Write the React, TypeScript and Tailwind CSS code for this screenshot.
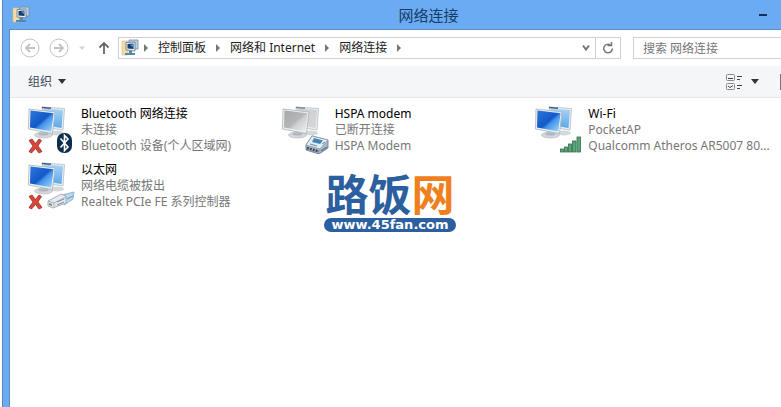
import type { ReactNode } from "react";

type Badge = "bluetooth" | "ethernet" | "modem" | "wifi";

type Connection = {
  name: string;
  status: string;
  device: string;
  badge: Badge;
  failed?: boolean;
  disabled?: boolean;
};

const connections: Connection[] = [
  { name: "Bluetooth 网络连接", status: "未连接", device: "Bluetooth 设备(个人区域网)", badge: "bluetooth", failed: true },
  { name: "HSPA modem", status: "已断开连接", device: "HSPA Modem", badge: "modem", disabled: true },
  { name: "Wi-Fi", status: "PocketAP", device: "Qualcomm Atheros AR5007 80...", badge: "wifi" },
  { name: "以太网", status: "网络电缆被拔出", device: "Realtek PCIe FE 系列控制器", badge: "ethernet", failed: true },
];

const badges: Record<Badge, ReactNode> = {
  bluetooth: (
    <g>
      <rect x="29" y="27" width="15" height="20" rx="7" fill="#0d2f4f" />
      <path d="M32.5 32.5 40 41 36.5 44.5V29.5L40 33 32.5 41.5" fill="none" stroke="#fff" strokeWidth="1.6" />
    </g>
  ),
  modem: (
    <g strokeLinejoin="round">
      <path d="M24 39 30 30 46 34 46 42 37 48 24 44Z" fill="#a9b8c4" stroke="#66747f" strokeWidth=".8" />
      <path d="M24 39 30 30 46 34 38 43Z" fill="#e3edf4" stroke="#7f919e" strokeWidth=".7" />
      <path d="M32 32 41 34.5 38 38 30 36Z" fill="#3f86b8" />
      <path d="m28 38 7 2M40 38l3-2" stroke="#6f8796" />
      <path d="m25 42 12 3.500" stroke="#3b4b57" strokeWidth="2.500" strokeDasharray="2 1" />
      <path d="m39 45 6-4" stroke="#4684a8" strokeWidth="1.5" />
    </g>
  ),
  wifi: (
    <g fill="#55a878" stroke="#37684c" strokeWidth=".8">
      <rect x="25.5" y="43" width="3" height="3" />
      <rect x="29.5" y="41" width="3" height="5" />
      <rect x="33.5" y="38" width="3" height="8" />
      <rect x="37.5" y="35" width="3.5" height="11" />
      <rect x="42" y="31" width="3.5" height="15" />
    </g>
  ),
  ethernet: (
    <g strokeLinejoin="round">
      <path d="m34 33 12-3-1 7-9 6Z" fill="#b9d9ee" stroke="#7ea9c7" strokeWidth=".8" />
      <path d="M20 39 33 32l5 2v7l-13 5-5-2Z" fill="#e4e9ed" stroke="#98a2aa" strokeWidth=".8" />
      <path d="m20 39 6 2 12-6M26 41v4" fill="none" stroke="#98a2aa" strokeWidth=".8" />
      <path d="m29 40 7-3M29 43l7-3M39 37l6-3" stroke="#7d909d" />
      <path d="m21 41 3 1v2l-3-1Z" fill="#7b858d" />
    </g>
  ),
};

const ConnectionIcon = ({ badge, failed, disabled }: Pick<Connection, "badge" | "failed" | "disabled">) => {
  const id = `screen-${badge}`;
  return (
    <svg viewBox="0 0 48 48" className="size-12 shrink-0" aria-hidden="true">
      <defs>
        <linearGradient id={id} x1="0" y1="0" x2="1" y2="1">
          <stop offset="0" stopColor={disabled ? "#a4a6a7" : "#2a78dc"} />
          <stop offset=".5" stopColor={disabled ? "#b5b6b7" : "#1558c8"} />
          <stop offset=".6" stopColor={disabled ? "#cecfd0" : "#4595ea"} />
          <stop offset="1" stopColor={disabled ? "#efefef" : "#a5dcfb"} />
        </linearGradient>
        <linearGradient id={`${id}-back`} x1="0" y1="0" x2="0" y2="1">
          <stop offset="0" stopColor={disabled ? "#cfd0d1" : "#a9d3f7"} />
          <stop offset="1" stopColor={disabled ? "#d5d6d7" : "#5ba9ea"} />
        </linearGradient>
      </defs>
      {/* Back monitor */}
      <ellipse cx="29" cy="27" rx="7" ry="2.5" fill="#d5d8da" />
      <path d="M14 1 36.5 2.5 35 24 15 21Z" fill="#e8edf0" stroke="#b5bec5" strokeWidth=".8" />
      <path d="M15.5 2.5 35 4 33.5 22 16 19Z" fill={`url(#${id}-back)`} />
      <path d="m14 1.5 9 .8" stroke={disabled ? "#85898c" : "#42627f"} strokeWidth="1.5" />
      {/* Front monitor */}
      <path d="m12 23 6 1v4h-6Z" fill="#c3c8cc" />
      <ellipse cx="15.5" cy="29" rx="9" ry="3" fill="#d3d7da" stroke="#b0b6ba" strokeWidth=".6" />
      <ellipse cx="15.5" cy="28" rx="5" ry="1.5" fill="#b1b8bd" />
      <path d="M1 3 27 6 24.5 27.5.5 23Z" fill="#edf1f4" stroke="#a9b2ba" strokeWidth=".8" />
      <path d="M2.500 4.500 25.500 7.200 23.300 25.500 2 21.500Z" fill={`url(#${id})`} />
      {failed && (
        <path
          d="m1 34.5 3-1.500 3.500 4.500L11 33l2.500 1.500L10 40l4 5.500-3 1.500-3.500-4.500L3.500 47l-2.500-1.500L5 40Z"
          fill="#dd4438"
          stroke="#8f342e"
          strokeWidth=".8"
        />
      )}
      {badges[badge]}
    </svg>
  );
};

const FolderIcon = ({ className }: { className: string }) => (
  <svg viewBox="0 0 18 18" className={className} aria-hidden="true">
    <path d="M1 2h6v14H1Z" fill="#f4dba7" stroke="#ddbc83" strokeWidth=".6" />
    <path d="M8 1h9v9H8Z" fill="#b7d3e9" stroke="#768c9c" strokeWidth=".8" />
    <path d="M5 3.5 14 3v9l-9-1Z" fill="#e6eef3" stroke="#66747f" strokeWidth=".8" />
    <path d="m6.500 5 6-.5V10l-6-.5Z" fill="#173d76" />
    <path d="m9 6 3-1v3Z" fill="#5591ca" />
    <path d="M8 12h3v2h3v2H4v-2h4Z" fill="#548aa8" />
  </svg>
);

const RightArrow = () => (
  <svg viewBox="0 0 4 8" className="h-2 w-1 shrink-0" aria-hidden="true">
    <path d="M0 0v8l4-4Z" fill="#777" />
  </svg>
);

const DownArrow = () => (
  <svg viewBox="0 0 8 5" className="h-[5px] w-2" aria-hidden="true">
    <path d="M0 0h8L4 5Z" fill="#333" />
  </svg>
);

const TitleBar = () => (
  <header className="flex h-[29px] items-center pr-3 pl-[3px]">
    <FolderIcon className="size-[18px]" />
    <h1 className="flex-1 pl-[70px] text-center text-[15px] leading-7 text-[#183c66]">网络连接</h1>
    <button type="button" aria-label="最小化" className="flex h-6 w-3 items-center justify-center">
      <span className="h-[2px] w-2 bg-[#12315c]"></span>
    </button>
  </header>
);

const AddressBar = () => (
  <nav className="flex h-9 items-center pl-[10px]">
    <button type="button" aria-label="后退" className="mr-[9px]">
      <svg viewBox="0 0 20 20" className="size-5" fill="none" stroke="#c3c3c3">
        <circle cx="10" cy="10" r="9" />
        <path d="M15 10H6m4-4-4 4 4 4" strokeWidth="1.8" />
      </svg>
    </button>
    <button type="button" aria-label="前进" className="mr-[9px]">
      <svg viewBox="0 0 20 20" className="size-5" fill="none" stroke="#c3c3c3">
        <circle cx="10" cy="10" r="9" />
        <path d="M5 10h9m-4-4 4 4-4 4" strokeWidth="1.8" />
      </svg>
    </button>
    <button type="button" aria-label="最近浏览的位置" className="mr-3">
      <svg viewBox="0 0 8 5" className="h-[5px] w-2">
        <path d="M1 .5h6L4 4Z" fill="#d2d2d2" />
      </svg>
    </button>
    <button type="button" aria-label="上移" className="mr-2">
      <svg viewBox="0 0 12 14" className="h-[14px] w-3" fill="none" stroke="#666" strokeWidth="1.8">
        <path d="M6 13V2M1.5 6.5 6 2l4.500 4.500" />
      </svg>
    </button>

    <div className="flex h-[22px] min-w-0 flex-1 items-center border border-[#d0d0d0] pl-[2px]">
      <FolderIcon className="mr-[5px] size-[18px] shrink-0" />
      <RightArrow />
      <a href="#control-panel" className="mx-[10px]">控制面板</a>
      <RightArrow />
      <a href="#network" className="mx-[10px]">网络和 Internet</a>
      <RightArrow />
      <a href="#connections" className="mx-[10px]">网络连接</a>
      <RightArrow />
      <button type="button" aria-label="展开地址" className="mr-1 ml-auto">
        <svg viewBox="0 0 10 8" className="h-2 w-[10px]" fill="none" stroke="#777" strokeWidth="2">
          <path d="m2 1.5 3 4 3-4" />
        </svg>
      </button>
      <button
        type="button"
        aria-label="刷新"
        className="flex h-full w-[25px] items-center justify-center border-l border-[#d0d0d0]"
      >
        <svg viewBox="0 0 12 12" className="size-3" fill="none" stroke="#777" strokeWidth="1.5">
          <path d="M8.5 3A4.3 4.3 0 1 0 10.3 6.5" />
          <path d="M5.5 3.5h4V0" />
        </svg>
      </button>
    </div>

    <input
      type="search"
      aria-label="搜索 网络连接"
      placeholder="搜索 网络连接"
      className="ml-3 h-[22px] w-[148px] shrink-0 border border-r-0 border-[#d0d0d0] pl-[9px] outline-none placeholder:text-[#777]"
    />
  </nav>
);

const Toolbar = () => (
  <div className="flex h-8 items-center justify-between border-b border-[#e6e7e9] bg-[#f5f6f8] pl-[18px]">
    <button type="button" className="flex items-center gap-[6px] text-[#3b4a5c]">
      组织
      <DownArrow />
    </button>
    <div className="flex items-center">
      <button type="button" aria-label="更改您的视图" className="flex items-center gap-2">
        <svg viewBox="0 0 17 16" className="h-4 w-[17px]" fill="none" stroke="#888">
          <rect x=".5" y=".5" width="8" height="6" rx="1" />
          <rect x=".5" y="9.5" width="8" height="6" rx="1" />
          <path d="M2 4.5h5M2 12l2 1.500 3-2M11 2.500h5M11 5.500h3M11 11.500h5M11 14.500h3" stroke="#444" />
        </svg>
        <DownArrow />
      </button>
      <span className="ml-[21px] h-4 w-px bg-[#777]"></span>
    </div>
  </div>
);

const SiteLogo = () => (
  <div className="pointer-events-none absolute top-[168px] left-[324px] w-[132px] text-center font-['Liberation_Sans','Noto_Sans_CJK_SC',sans-serif] font-bold">
    <p className="pt-[7px] text-[43px] leading-[43px] text-[#2c5f9f]">
      路饭<span className="text-[#f07f1e]">网</span>
    </p>
    <p className="rounded-full bg-[#2c5f9f] font-['DejaVu_Sans',sans-serif] text-[13px] leading-[14px] text-white">
      www.45fan.com
    </p>
  </div>
);

const App = () => (
  <div className="relative flex min-h-screen overflow-hidden bg-white pl-[2px] font-['Noto_Sans','Noto_Sans_CJK_SC',sans-serif] text-xs text-[#222]">
    <div className="flex min-w-0 flex-1 flex-col border-l border-[#5688bd] bg-[#6aabf3] pl-[6px]">
      <TitleBar />
      <main className="flex-1 border-t border-l border-[#5b8fc4] bg-white">
        <AddressBar />
        <Toolbar />
        <ul className="grid grid-cols-3 gap-2 pt-2 pl-[18px]">
          {connections.map((item) => (
            <li key={item.name} className="flex gap-[5px]">
              <ConnectionIcon badge={item.badge} failed={item.failed} disabled={item.disabled} />
              <div className="min-w-0 leading-4 whitespace-nowrap text-[#777]">
                <p className="text-black">{item.name}</p>
                <p>{item.status}</p>
                <p>{item.device}</p>
              </div>
            </li>
          ))}
        </ul>
      </main>
    </div>
    <SiteLogo />
  </div>
);

export default App;
